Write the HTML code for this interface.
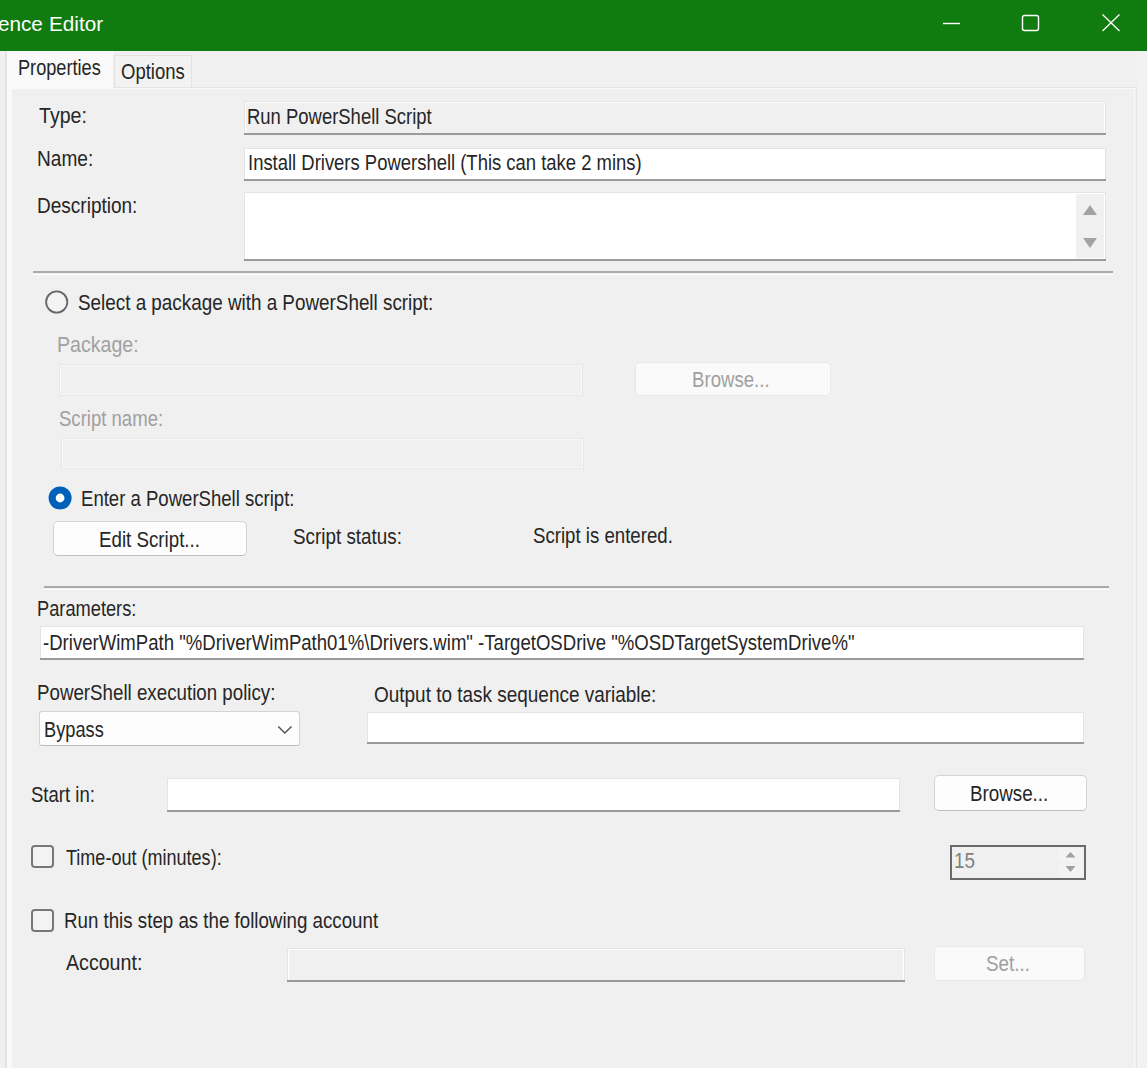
<!DOCTYPE html>
<html><head><meta charset="utf-8">
<style>
html,body{margin:0;padding:0;}
body{width:1147px;height:1068px;overflow:hidden;position:relative;background:#F0F0F0;font-family:"Liberation Sans",sans-serif;}
#root{position:absolute;left:0;top:0;width:1147px;height:1068px;overflow:hidden;background:#F0F0F0;}
.a{position:absolute;box-sizing:border-box;}
.t{position:absolute;line-height:26px;white-space:pre;transform-origin:0 0;}
.tb{position:absolute;box-sizing:border-box;background:#fff;border:1px solid #E4E4E4;border-bottom:none;}
.tb::before{content:"";position:absolute;left:0;right:0;top:0;bottom:0;border:1px solid #fff;border-bottom:none;}
.tb::after{content:"";position:absolute;left:-1px;right:-1px;bottom:0;height:2px;background:#9A9A9A;}
.dis{position:absolute;box-sizing:border-box;background:#F0F0F0;border:1px solid #E6E6E6;}
.dis::before{content:"";position:absolute;left:0;right:0;top:0;bottom:0;border:1px solid #F9F9F9;}
.btn{position:absolute;box-sizing:border-box;background:#FDFDFD;border:1px solid #D3D3D3;border-bottom-color:#BDBDBD;border-radius:5px;}
.sep{position:absolute;height:2px;background:#ABABAB;}
.sep::after{content:"";position:absolute;left:0;right:0;top:2.5px;height:1.5px;background:#FFF;}
</style></head><body><div id="root">
<!-- title bar -->
<div class="a" style="left:0;top:0;width:1147px;height:51px;background:#107C10;"></div>
<svg class="a" style="left:0;top:0" width="1147" height="51">
  <line x1="943" y1="23.5" x2="960" y2="23.5" stroke="#fff" stroke-width="1.4"/>
  <rect x="1022.5" y="15.5" width="16" height="15" rx="2" ry="2" fill="none" stroke="#fff" stroke-width="1.4"/>
  <line x1="1102.5" y1="14.5" x2="1119.5" y2="31" stroke="#fff" stroke-width="1.3"/>
  <line x1="1119.5" y1="14.5" x2="1102.5" y2="31" stroke="#fff" stroke-width="1.3"/>
</svg>
<!-- tab frame -->
<div class="a" style="left:5px;top:51px;width:1.5px;height:1017px;background:#E4E4E4;"></div>
<div class="a" style="left:7px;top:51px;width:106px;height:38px;background:#F9F9F9;"></div>
<div class="a" style="left:7px;top:89px;width:5px;height:979px;background:#F9F9F9;"></div>
<div class="a" style="left:113px;top:87px;width:1024px;height:1px;background:#E4E4E4;"></div>
<div class="a" style="left:12px;top:88px;width:1123px;height:1px;background:#FAFAFA;"></div>
<div class="a" style="left:1134px;top:88px;width:1px;height:980px;background:#FAFAFA;"></div>
<div class="a" style="left:1136px;top:87px;width:1px;height:981px;background:#E4E4E4;"></div>
<div class="a" style="left:1137px;top:51px;width:10px;height:1017px;background:#F2F2F2;"></div>
<div class="a" style="left:114px;top:55px;width:78px;height:32px;background:#F2F2F2;border:1px solid #E2E2E2;border-bottom:none;"></div>

<!-- boxes -->
<div class="tb" style="left:244px;top:101px;width:862px;height:34px;background:#F0F0F0;"></div>
<div class="tb" style="left:244px;top:148px;width:862px;height:33px;"></div>
<div class="tb" style="left:244px;top:192px;width:862px;height:69px;"></div>
<div class="a" style="left:1076px;top:194px;width:28px;height:64px;background:#F0F0F0;"></div>
<svg class="a" style="left:1076px;top:194px" width="28" height="64">
  <path d="M7 21 L14 11 L21 21 Z" fill="#A3A3A3"/>
  <path d="M7 44 L14 54 L21 44 Z" fill="#A3A3A3"/>
</svg>
<div class="sep" style="left:33px;top:271px;width:1080px;"></div>

<svg class="a" style="left:44px;top:289px" width="26" height="26"><circle cx="12.7" cy="13" r="10.6" fill="#F3F3F3" stroke="#666" stroke-width="1.8"/></svg>
<div class="dis" style="left:59px;top:364px;width:524px;height:32px;"></div>
<div class="btn" style="left:635px;top:362px;width:196px;height:34px;background:#FAFAFA;border-color:#E8E8E8;"></div>
<div class="dis" style="left:61px;top:438px;width:523px;height:31px;"></div>

<svg class="a" style="left:47px;top:485px" width="26" height="26"><circle cx="13.1" cy="13" r="11.5" fill="#005FB8"/><circle cx="13.1" cy="13" r="4.4" fill="#fff"/></svg>
<div class="btn" style="left:53px;top:521px;width:194px;height:35px;"></div>
<div class="sep" style="left:44px;top:586px;width:1065px;"></div>

<div class="tb" style="left:40px;top:626px;width:1044px;height:34px;"></div>
<div class="btn" style="left:39px;top:711px;width:261px;height:35px;border-radius:3px;"></div>
<svg class="a" style="left:270px;top:716px" width="30" height="25"><path d="M8.3 10.5 L14.8 17 L21.5 10.5" fill="none" stroke="#555" stroke-width="1.5"/></svg>
<div class="tb" style="left:367px;top:712px;width:717px;height:32px;"></div>

<div class="tb" style="left:167px;top:778px;width:733px;height:34px;"></div>
<div class="btn" style="left:934px;top:775px;width:153px;height:36px;"></div>

<div class="a" style="left:31px;top:845px;width:23px;height:23px;border:2px solid #777;border-radius:4px;background:#F3F3F3;"></div>
<div class="a" style="left:950px;top:845px;width:136px;height:35px;border:2px solid #6A6A6A;background:#F0F0F0;"></div>
<svg class="a" style="left:1058px;top:847px" width="26" height="31">
  <rect x="1" y="1" width="23" height="14" fill="#F3F3F3"/>
  <rect x="1" y="17" width="23" height="13" fill="#F3F3F3"/>
  <path d="M7.5 10.5 L12.5 5 L17.5 10.5 Z" fill="#A0A0A0"/>
  <path d="M7.5 19 L12.5 25 L17.5 19 Z" fill="#A0A0A0"/>
</svg>

<div class="a" style="left:31px;top:909px;width:23px;height:23px;border:2px solid #777;border-radius:4px;background:#F3F3F3;"></div>
<div class="tb" style="left:287px;top:948px;width:618px;height:34px;background:#F0F0F0;"></div>
<div class="btn" style="left:934px;top:946px;width:151px;height:35px;background:#FAFAFA;border-color:#E8E8E8;"></div>

<!-- texts -->
<div class="t" style="left:49.33px;top:11.20px;font-size:21.0px;color:#fff;transform:scaleX(0.9849)">Editor</div>
<div class="t" style="left:-2.42px;top:11.20px;font-size:21.0px;color:#fff;transform:scaleX(0.9849)">ence</div>
<div class="t" style="left:17.85px;top:55.30px;font-size:22.0px;color:#262626;transform:scaleX(0.8255)">Properties</div>
<div class="t" style="left:120.96px;top:59.00px;font-size:22.0px;color:#262626;transform:scaleX(0.8405)">Options</div>
<div class="t" style="left:38.70px;top:102.70px;font-size:22.0px;color:#262626;transform:scaleX(0.8904)">Type:</div>
<div class="t" style="left:36.97px;top:146.40px;font-size:22.0px;color:#262626;transform:scaleX(0.8672)">Name:</div>
<div class="t" style="left:36.97px;top:193.00px;font-size:22.0px;color:#262626;transform:scaleX(0.8643)">Description:</div>
<div class="t" style="left:247.22px;top:104.30px;font-size:22.0px;color:#262626;transform:scaleX(0.8390)">Run PowerShell Script</div>
<div class="t" style="left:247.62px;top:150.00px;font-size:22.0px;color:#262626;transform:scaleX(0.8386)">Install Drivers Powershell (This can take 2 mins)</div>
<div class="t" style="left:77.64px;top:289.80px;font-size:22.0px;color:#262626;transform:scaleX(0.8570)">Select a package with a PowerShell script:</div>
<div class="t" style="left:57.12px;top:331.60px;font-size:22.0px;color:#A0A0A0;transform:scaleX(0.8909)">Package:</div>
<div class="t" style="left:59.36px;top:405.60px;font-size:22.0px;color:#A0A0A0;transform:scaleX(0.8430)">Script name:</div>
<div class="t" style="left:692.11px;top:367.00px;font-size:22.0px;color:#A0A0A0;transform:scaleX(0.8466)">Browse...</div>
<div class="t" style="left:81.31px;top:486.40px;font-size:22.0px;color:#262626;transform:scaleX(0.8434)">Enter a PowerShell script:</div>
<div class="t" style="left:98.80px;top:526.50px;font-size:22.0px;color:#262626;transform:scaleX(0.8513)">Edit Script...</div>
<div class="t" style="left:293.04px;top:524.00px;font-size:22.0px;color:#262626;transform:scaleX(0.8565)">Script status:</div>
<div class="t" style="left:532.95px;top:522.80px;font-size:22.0px;color:#262626;transform:scaleX(0.8469)">Script is entered.</div>
<div class="t" style="left:37.34px;top:596.00px;font-size:22.0px;color:#262626;transform:scaleX(0.8293)">Parameters:</div>
<div class="t" style="left:42.76px;top:629.50px;font-size:22.0px;color:#262626;transform:scaleX(0.8440)">-DriverWimPath "%DriverWimPath01%\Drivers.wim" -TargetOSDrive "%OSDTargetSystemDrive%"</div>
<div class="t" style="left:37.30px;top:679.90px;font-size:22.0px;color:#262626;transform:scaleX(0.8514)">PowerShell execution policy:</div>
<div class="t" style="left:44.14px;top:716.50px;font-size:22.0px;color:#262626;transform:scaleX(0.8286)">Bypass</div>
<div class="t" style="left:374.24px;top:681.60px;font-size:22.0px;color:#262626;transform:scaleX(0.8615)">Output to task sequence variable:</div>
<div class="t" style="left:31.16px;top:781.80px;font-size:22.0px;color:#262626;transform:scaleX(0.8425)">Start in:</div>
<div class="t" style="left:969.99px;top:781.40px;font-size:22.0px;color:#262626;transform:scaleX(0.8534)">Browse...</div>
<div class="t" style="left:65.60px;top:844.60px;font-size:22.0px;color:#262626;transform:scaleX(0.8197)">Time-out (minutes):</div>
<div class="t" style="left:953.88px;top:848.00px;font-size:22.0px;color:#808080;transform:scaleX(0.8591)">15</div>
<div class="t" style="left:63.90px;top:908.10px;font-size:22.0px;color:#262626;transform:scaleX(0.8504)">Run this step as the following account</div>
<div class="t" style="left:66.30px;top:949.60px;font-size:22.0px;color:#262626;transform:scaleX(0.8917)">Account:</div>
<div class="t" style="left:986.34px;top:951.00px;font-size:22.0px;color:#A0A0A0;transform:scaleX(0.8571)">Set...</div>
</div></body></html>
